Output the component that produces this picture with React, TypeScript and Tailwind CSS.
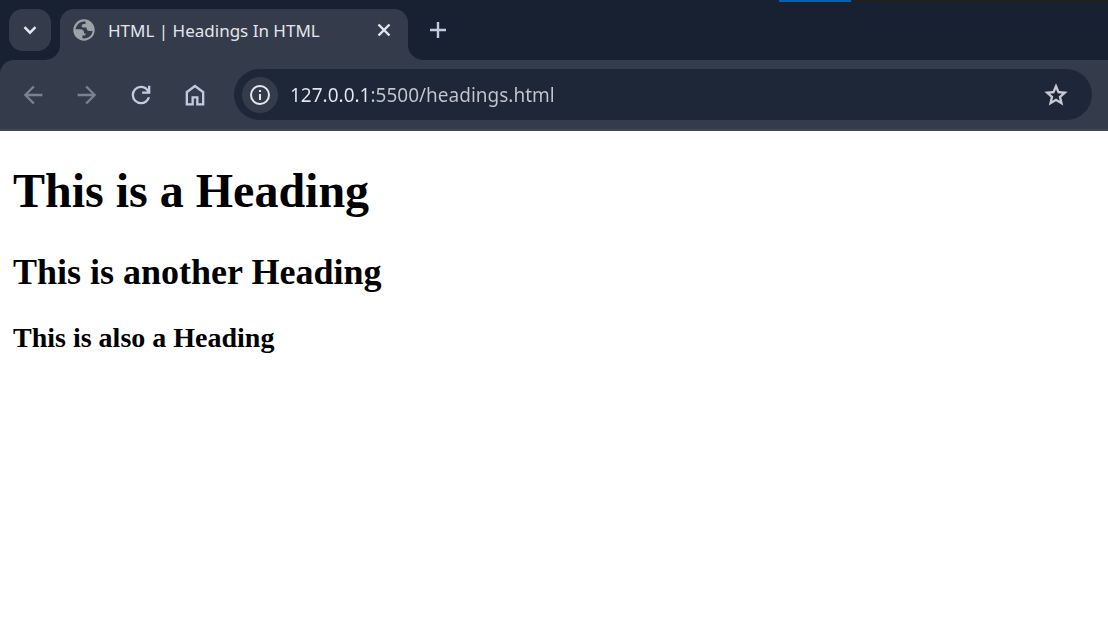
import type { ReactNode } from "react";

const ICONS = {
  back: "m313-440 224 224-57 56-320-320 320-320 57 56-224 224h487v80H313Z",
  forward: "M647-440H160v-80h487L423-744l57-56 320 320-320 320-57-56 224-224Z",
  reload:
    "M480-160q-134 0-227-93t-93-227q0-134 93-227t227-93q69 0 132 28.5T720-690v-110h80v280H520v-80h168q-32-56-87.5-88T480-720q-100 0-170 70t-70 170q0 100 70 170t170 70q77 0 139-44t87-116h84q-28 106-114 173t-196 67Z",
  home: "M240-200h120v-240h240v240h120v-360L480-740 240-560v360Zm-80 80v-480l320-240 320 240v480H520v-240h-80v240H160Z",
  star: "m354-287 126-76 126 77-33-144 111-96-146-13-58-136-58 135-146 13 111 97-33 143ZM233-120l65-281L80-590l288-25 112-265 112 265 288 25-218 189 65 281-247-149-247 149Z",
};

function Glyph({ name }: { name: keyof typeof ICONS }) {
  return (
    <svg viewBox="0 -960 960 960" className="size-[28px]" fill="currentColor" aria-hidden="true">
      <path d={ICONS[name]} />
    </svg>
  );
}

function ToolButton({ label, disabled, children }: { label: string; disabled?: boolean; children: ReactNode }) {
  return (
    <button
      type="button"
      aria-label={label}
      disabled={disabled}
      className="flex size-[42px] items-center justify-center rounded-full text-[#c1cae0] disabled:text-[#7b8190]"
    >
      {children}
    </button>
  );
}

function TabFoot({ flip }: { flip?: boolean }) {
  return (
    <svg viewBox="0 0 15 15" className="size-[15px] text-[#343c4c]" fill="currentColor" aria-hidden="true">
      <path d={flip ? "M0 0A15 15 0 0 0 15 15H0Z" : "M15 0A15 15 0 0 1 0 15H15Z"} />
    </svg>
  );
}

function Globe() {
  return (
    <svg viewBox="0 0 22 22" className="size-[22px] shrink-0" aria-hidden="true">
      <circle cx="11" cy="11" r="10.7" fill="#9da2a8" />
      <path
        d="M12.500 2.500C7.500 1.800 3.200 5.500 2.600 10.300H7.500C9.600 10.300 11 11.600 11 13.400V14.400H12.800C12.800 15.800 12 16.600 10.800 16.600H9.400V19.300C14.600 20.200 19.200 16.600 19.500 12H16.200C14.600 12 13.600 11 13.600 9.600V8.600H10.200C9.200 8.600 8.600 8 8.600 7.100C8.600 5.700 9.600 5 10.800 5H12.500Z"
        fill="#343c4c"
      />
    </svg>
  );
}

function TabStrip() {
  return (
    <div className="flex h-[51px] items-start pl-[9px]">
      <button
        type="button"
        aria-label="Search tabs"
        className="flex size-[42px] items-center justify-center rounded-[14px] bg-[#343c4c]"
      >
        <svg viewBox="0 0 14 14" className="size-[14px]" fill="none" stroke="#e6e8ee" strokeWidth="2.4" aria-hidden="true">
          <path d="M1.500 4.200 7 9.700l5.500-5.500" />
        </svg>
      </button>
      <div className="-ml-[6px] flex items-end self-stretch">
        <TabFoot />
        <div className="flex h-[51px] w-[348px] items-center rounded-t-[14px] bg-[#343c4c] pr-[14px] pb-[9px] pl-[13px]">
          <Globe />
          <span className="ml-[13px] flex-1 truncate pt-[2px] text-[17px] leading-[24px] text-[#e3e5ea]">
            HTML | Headings In HTML
          </span>
          <button type="button" aria-label="Close tab" className="flex size-[20px] items-center justify-center">
            <svg viewBox="0 0 14 14" className="size-[14px]" stroke="#e6e8ee" strokeWidth="2.4" aria-hidden="true">
              <path d="m1.500 1.500 11 11m0-11-11 11" />
            </svg>
          </button>
        </div>
        <TabFoot flip />
      </div>
      <button type="button" aria-label="New tab" className="-ml-[6px] flex size-[42px] items-center justify-center">
        <svg viewBox="0 0 16 16" className="size-[16px]" stroke="#c1cae0" strokeWidth="2.4" aria-hidden="true">
          <path d="M8 0v16M0 8h16" />
        </svg>
      </button>
    </div>
  );
}

function Toolbar() {
  return (
    <div className="flex items-center rounded-tl-[14px] border-b-2 border-[#404858] bg-[#343c4c] py-[9px] pr-[16px] pl-[12px]">
      <div className="flex gap-[12px]">
        <ToolButton label="Back" disabled>
          <Glyph name="back" />
        </ToolButton>
        <ToolButton label="Forward" disabled>
          <Glyph name="forward" />
        </ToolButton>
        <ToolButton label="Reload">
          <Glyph name="reload" />
        </ToolButton>
        <ToolButton label="Home">
          <Glyph name="home" />
        </ToolButton>
      </div>
      <div className="ml-[18px] flex h-[51px] flex-1 items-center rounded-full bg-[#1e2737] pr-[15px] pl-[8px]">
        <button
          type="button"
          aria-label="View site information"
          className="flex size-[36px] shrink-0 items-center justify-center rounded-full bg-[#343c4c]"
        >
          <svg viewBox="0 0 20 20" className="size-[20px]" fill="none" stroke="#e6e8ee" strokeWidth="2" aria-hidden="true">
            <circle cx="10" cy="10" r="9" />
            <path d="M10 9v6M10 5v2" />
          </svg>
        </button>
        <input
          type="text"
          aria-label="Address"
          defaultValue="127.0.0.1:5500/headings.html"
          className="ml-[12px] h-[36px] min-w-0 flex-1 bg-linear-to-r from-[#e6e8ee] from-[81px] to-[#c3c6cd] to-[81px] bg-clip-text text-[19px] text-transparent outline-none"
        />
        <button
          type="button"
          aria-label="Bookmark this page"
          className="flex size-[42px] items-center justify-center text-[#c7c9d3]"
        >
          <Glyph name="star" />
        </button>
      </div>
    </div>
  );
}

export default function App() {
  return (
    <div className="flex min-h-screen flex-col bg-white">
      <header className="bg-[#182131] font-['Noto_Sans','Open_Sans',sans-serif]">
        <div className="flex h-[9px] items-start justify-end">
          <div className="h-[2px] w-[72px] bg-[#0063b1]" />
          <div className="h-[2px] w-[257px] bg-[#202020]" />
        </div>
        <TabStrip />
        <Toolbar />
      </header>
      <main className="px-[13px] pt-[32px] font-['Liberation_Serif',serif] font-bold text-black">
        <h1 className="text-[48px] leading-[56px]">This is a Heading</h1>
        <h2 className="mt-[32px] text-[36px] leading-[42px]">This is another Heading</h2>
        <h3 className="mt-[29px] text-[28px] leading-[32px]">This is also a Heading</h3>
      </main>
    </div>
  );
}
